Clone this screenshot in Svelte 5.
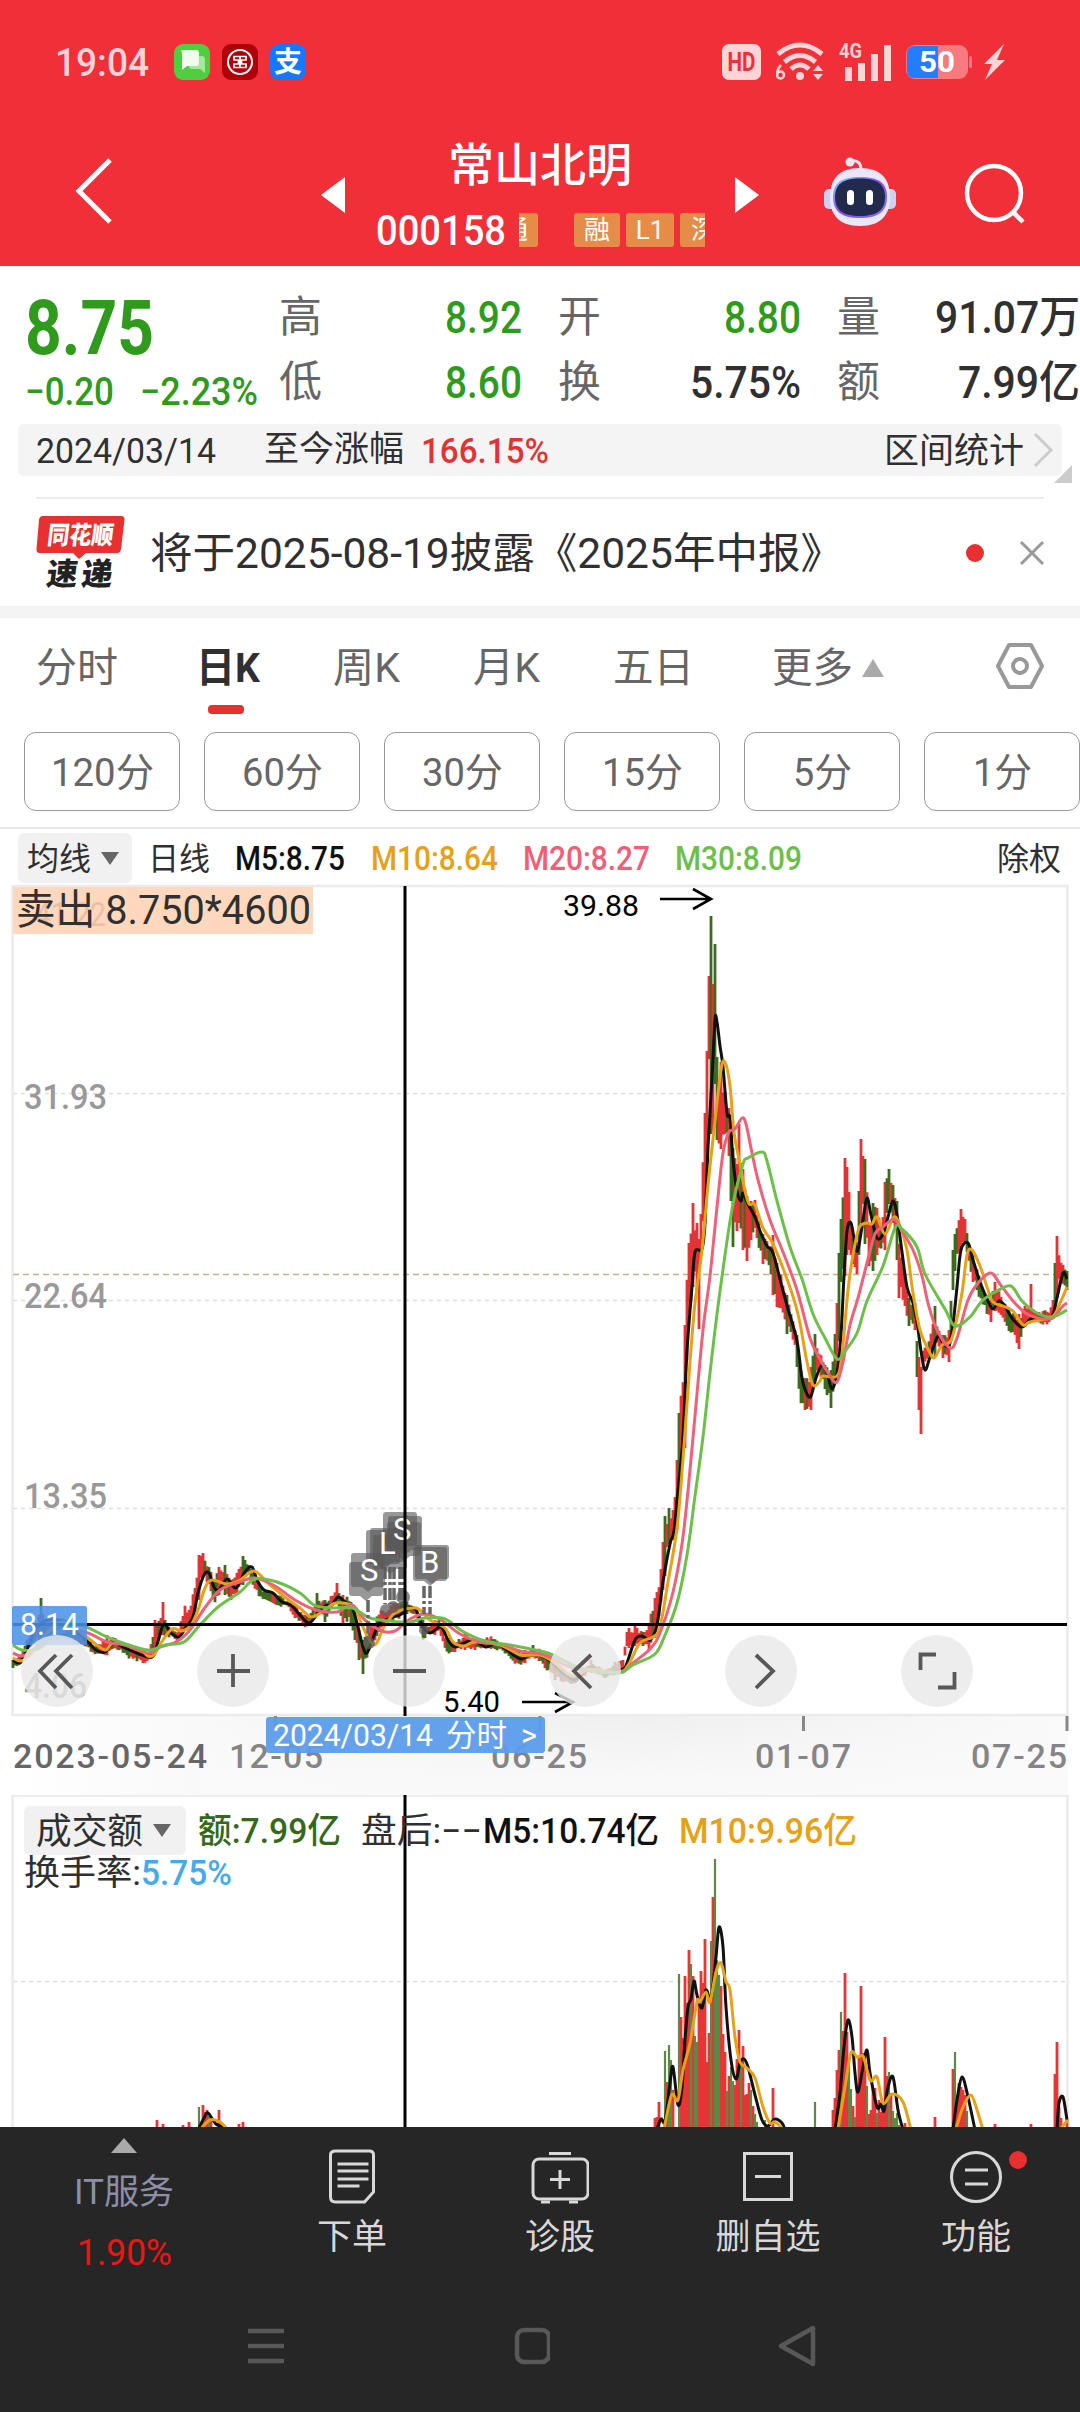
<script>
  const quotes = [
    { label: '高', value: '8.92', w: 77, down: true },
    { label: '开', value: '8.80', w: 77, down: true },
    { label: '量', value: '91.07万', w: 145 },
    { label: '低', value: '8.60', w: 77, down: true },
    { label: '换', value: '5.75%', w: 111 },
    { label: '额', value: '7.99亿', w: 122 },
  ];

  const tabs = [
    { name: '分时', w: 82 },
    { name: '日K', w: 64, active: true },
    { name: '周K', w: 67 },
    { name: '月K', w: 67 },
    { name: '五日', w: 81 },
    { name: '更多', w: 81, more: true },
  ];

  const periods = [
    { name: '120分', w: 103 },
    { name: '60分', w: 81 },
    { name: '30分', w: 81 },
    { name: '15分', w: 81 },
    { name: '5分', w: 59 },
    { name: '1分', w: 59 },
  ];

  const parse = (s) => s.trim().split(/\s+/).map((p) => p.split(',').map(Number));

  // moving averages of the daily chart
  const ma5 = parse(`13,1660 20,1663 27,1650 34,1632 43,1622 55,1619 71,1627 88,1642 96,1650 105,1652 114,1642 123,1647 139,1654 148,1657 154,1655
    159,1638 164,1624 171,1633 179,1637 186,1627 193,1617 198,1593 204,1575 209,1573 214,1587 219,1590 227,1579 236,1588 245,1572 252,1567 257,1580
    264,1590 273,1593 282,1602 291,1605 300,1615 309,1623 318,1613 325,1606 332,1605 338,1597 345,1602 352,1607 357,1623 363,1647 367,1653 373,1638
    379,1623 386,1620 393,1617 400,1615 409,1608 416,1610 423,1627 430,1633 441,1627 448,1640 455,1647 464,1643 473,1640 486,1647 496,1643 507,1650
    521,1659 532,1653 546,1658 563,1673 574,1680 579,1677 591,1668 606,1673 623,1669 627,1663 635,1640 642,1636 650,1640 657,1625 663,1582 670,1544
    674,1531 678,1491 683,1437 687,1351 692,1287 695,1252 702,1249 705,1223 708,1148 712,1078 715,1020 717,1022 720,1046 723,1067 727,1113 730,1118
    733,1159 737,1191 741,1201 743,1193 748,1204 755,1217 760,1231 767,1246 773,1253 782,1287 788,1309 797,1341 802,1378 807,1394 811,1396 816,1378
    822,1365 827,1373 832,1389 837,1373 841,1335 844,1276 847,1231 851,1223 855,1244 858,1250 863,1220 867,1198 871,1215 877,1238 883,1234 888,1217
    893,1201 897,1215 902,1252 907,1287 913,1303 917,1322 921,1351 925,1370 930,1357 938,1336 943,1343 949,1346 953,1325 957,1287 961,1250 968,1243
    973,1260 980,1282 988,1301 993,1309 999,1301 1005,1306 1012,1318 1022,1327 1032,1318 1043,1319 1052,1317 1057,1298 1063,1273 1067,1279`);
  const ma10 = parse(`13,1658 20,1661 28,1657 38,1645 50,1630 65,1622 88,1638 105,1650 114,1643 140,1650 148,1656 154,1655 161,1643 172,1629 182,1631
    191,1625 198,1610 205,1588 212,1580 227,1584 240,1580 254,1571 268,1583 286,1598 300,1608 311,1617 322,1612 336,1603 354,1607 362,1625 374,1645
    384,1627 395,1613 412,1608 420,1610 430,1620 445,1628 453,1642 464,1646 475,1642 500,1645 521,1655 540,1655 555,1663 572,1676 590,1669 610,1672
    623,1671 630,1662 640,1643 653,1637 660,1627 668,1582 677,1528 683,1459 690,1362 695,1303 702,1250 708,1185 715,1121 721,1070 725,1062 730,1086
    734,1132 740,1164 745,1191 749,1204 755,1205 763,1228 773,1244 787,1279 798,1314 807,1362 813,1385 820,1381 823,1376 837,1376 842,1354 848,1290
    853,1255 859,1228 867,1223 872,1224 877,1217 885,1234 894,1217 900,1226 907,1250 913,1293 920,1330 928,1349 934,1358 942,1345 950,1342 955,1327
    962,1293 967,1255 972,1250 980,1266 987,1287 993,1302 1003,1306 1013,1311 1023,1325 1030,1322 1052,1317 1060,1303 1067,1287`);
  const ma20 = parse(`13,1653 22,1656 33,1650 50,1638 70,1630 88,1633 107,1642 125,1645 148,1653 160,1647 176,1642 190,1630 204,1609 220,1590 240,1582
    255,1578 275,1586 295,1600 316,1610 337,1612 352,1605 365,1620 382,1631 395,1631 410,1619 425,1614 441,1620 460,1634 480,1642 500,1644 520,1651
    545,1655 570,1667 600,1672 623,1671 633,1663 650,1649 660,1633 673,1592 682,1544 688,1491 695,1416 703,1330 710,1276 717,1207 723,1153 729,1132
    735,1129 742,1118 746,1124 752,1153 758,1180 770,1220 783,1252 797,1290 810,1338 820,1359 830,1376 837,1382 843,1362 850,1325 858,1298 867,1263
    875,1234 883,1227 894,1219 902,1231 913,1250 922,1276 928,1303 937,1330 950,1348 957,1338 967,1303 975,1287 990,1273 1000,1284 1013,1301
    1027,1314 1043,1319 1053,1318 1062,1307 1067,1303`);
  const ma30 = parse(`13,1645 22,1650 40,1648 60,1630 80,1625 107,1637 120,1642 148,1650 165,1645 184,1642 200,1625 218,1607 240,1592 255,1579
    277,1582 300,1593 314,1605 330,1608 352,1608 370,1618 390,1621 410,1622 425,1618 445,1619 462,1631 485,1641 510,1645 540,1651 553,1655 580,1668
    610,1673 623,1672 633,1665 655,1654 665,1635 677,1603 687,1555 695,1496 703,1437 710,1373 717,1314 725,1255 733,1204 743,1164 748,1158 762,1152
    767,1161 777,1201 790,1247 802,1279 813,1314 825,1338 837,1359 845,1351 857,1333 867,1301 883,1266 895,1228 902,1229 917,1247 925,1274 945,1309
    955,1326 970,1317 982,1301 997,1291 1011,1286 1022,1301 1037,1313 1052,1317 1067,1310`);

  // x, high, low along the chart; the bars in between are interpolated
  const envelope = parse(`13,1660,1668 20,1655,1665 27,1640,1655 34,1625,1645 39,1615,1640 41,1598,1638 43,1614,1640 70,1620,1640 88,1638,1650 96,1645,1655
    107,1635,1655 115,1638,1648 130,1645,1660 143,1650,1663 150,1650,1663 155,1620,1650 161,1618,1635 163,1602,1635 165,1620,1636 178,1632,1643
    184,1604,1637 190,1610,1628 194,1588,1620 199,1555,1600 203,1553,1575 208,1560,1590 214,1580,1607 219,1567,1595 225,1565,1595 231,1580,1600
    238,1568,1595 243,1556,1585 248,1560,1575 254,1575,1590 262,1588,1600 270,1590,1603 280,1595,1608 286,1600,1605 295,1605,1618 305,1615,1627
    312,1610,1622 317,1593,1615 325,1600,1622 332,1593,1610 337,1583,1603 343,1595,1625 350,1595,1625 355,1610,1640 359,1630,1660 363,1640,1674
    370,1625,1650 378,1612,1635 390,1605,1622 402,1597,1618 407,1602,1614 416,1608,1615 423,1620,1640 430,1625,1635 440,1615,1635 446,1635,1656
    455,1642,1652 465,1633,1650 475,1640,1650 490,1635,1650 500,1640,1652 510,1648,1658 516,1650,1667 525,1650,1663 533,1645,1657 545,1652,1668
    555,1665,1680 562,1670,1682 574,1675,1685 585,1668,1676 591,1660,1672 605,1670,1678 615,1662,1675 623,1660,1673 627,1632,1646 629,1628,1648
    635,1626,1646 643,1632,1646 650,1617,1657 655,1598,1638 660,1566,1622 663,1542,1590 665,1516,1576 669,1508,1544 673,1510,1540 677,1460,1530
    679,1413,1500 682,1370,1464 685,1325,1448 688,1239,1362 693,1203,1287 697,1223,1292 699,1239,1329 702,1175,1255 705,1113,1223 707,1051,1180
    709,976,1059 711,916,1134 713,984,1132 715,944,1084 717,1057,1140 721,1062,1149 725,1092,1134 729,1108,1156 731,1121,1201 733,1148,1247
    737,1164,1231 739,1124,1223 743,1169,1250 747,1196,1261 751,1201,1240 755,1200,1228 758,1215,1244 763,1234,1264 768,1239,1260 773,1235,1295
    777,1263,1307 782,1276,1309 787,1295,1334 792,1309,1333 797,1335,1367 800,1362,1410 805,1378,1410 811,1367,1410 815,1334,1381 818,1346,1373
    825,1365,1389 831,1370,1408 834,1346,1397 837,1303,1373 839,1253,1341 841,1219,1282 845,1158,1276 847,1167,1255 849,1192,1250 852,1228,1268
    857,1242,1274 859,1191,1255 861,1139,1223 863,1156,1204 865,1159,1244 869,1223,1266 873,1203,1271 877,1208,1255 882,1228,1250 885,1182,1250
    889,1169,1204 893,1185,1223 897,1201,1260 899,1244,1298 905,1276,1306 909,1298,1326 915,1303,1330 917,1341,1377 919,1357,1410 921,1367,1434
    923,1351,1370 928,1341,1357 935,1306,1357 938,1325,1345 943,1335,1358 949,1330,1362 951,1301,1341 953,1250,1290 955,1234,1271 961,1209,1250
    965,1219,1244 968,1239,1260 973,1255,1282 980,1279,1301 987,1298,1314 991,1298,1322 995,1282,1311 1002,1298,1317 1009,1309,1331 1019,1314,1349
    1025,1306,1327 1029,1308,1324 1031,1284,1322 1033,1309,1322 1042,1311,1326 1050,1309,1324 1053,1300,1318 1055,1263,1314 1057,1236,1298
    1060,1260,1285 1067,1271,1290`);

  const noise = (n) => {
    const v = Math.sin(n * 12.9898) * 43758.5453;
    return v - Math.floor(v);
  };

  function lerpAt(list, x, k) {
    let i = 1;
    while (i < list.length - 1 && list[i][0] < x) i++;
    const a = list[i - 1];
    const b = list[i];
    return a[k] + ((b[k] - a[k]) * (x - a[0])) / (b[0] - a[0]);
  }

  const candles = [];
  for (let x = 13; x <= 1067; x += 2) {
    const hi = lerpAt(envelope, x, 1);
    const lo = lerpAt(envelope, x, 2);
    const exact = envelope.some((e) => e[0] === x);
    const range = lo - hi;
    const top = exact ? hi : hi + range * 0.3 * noise(x);
    const bottom = exact ? lo : lo - range * 0.3 * noise(x + 7);
    const slope = lerpAt(ma5, Math.min(x + 4, 1067), 1) - lerpAt(ma5, Math.max(x - 4, 13), 1);
    let up = noise(x * 3.7) > (slope > 0 ? 0.5 : 0.25);
    if (slope < -25 && x < 710) up = true;
    if ([41, 711, 715, 665, 669, 679, 731, 733, 889, 815, 917, 955].includes(x)) up = false;
    if ([713, 721, 723, 725, 739, 743, 747, 773, 777, 845, 847, 861, 919, 921, 961, 1031, 1057].includes(x)) up = true;
    candles.push({ x, top, h: Math.max(bottom - top, 3), up });
  }

  // turnover bars: x, top; the second list holds the falling days
  const volUp = parse(`157,2120 163,2124 183,2125 189,2122 203,2105 205,2112 207,2110 211,2118 219,2110 239,2124 243,2122 655,2118 657,2117 659,2102 667,2082
    673,2090 681,2017 683,2038 685,1976 687,2003 689,1950 693,1976 699,2003 701,1971 703,1983 705,1939 707,2062 709,2033 713,1897 721,1986 723,2034
    725,2052 729,2076 735,2085 737,2059 739,2030 743,2046 745,2095 747,2094 749,2083 753,2106 773,2088 833,2110 835,2098 837,2070 839,2050 843,2031
    845,1973 847,2032 853,2106 857,2087 859,2058 861,1986 863,2053 865,2058 869,2114 871,2110 873,2088 875,2088 879,2100 881,2112 883,2105 885,2037
    887,2076 891,2093 905,2123 935,2117 953,2069 957,2095 959,2083 961,2087 963,2090 965,2095 995,2124 1031,2124 1055,2074 1057,2042 1059,2107
    1061,2118 1067,2120`);
  const volDown = parse(`199,2107 209,2116 665,2051 669,2045 671,2060 679,1974 691,1964 695,2036 697,2042 711,1941 715,1859 717,1960 719,1975 727,2091
    731,2067 733,2081 741,2060 751,2090 755,2114 757,2122 765,2120 815,2102 841,2012 849,2065 851,2089 855,2117 867,2086 877,2113 889,2072 893,2111
    895,2118 897,2113 899,2125 955,2052 967,2111`);
  const volMa5 = [
    `199,2128 204,2118 208,2113 216,2124 224,2127`,
    `657,2129 661,2119 665,2121 670,2083 673,2067 678,2105 682,2087 685,2040 688,2007 691,1999 694,1981 697,1995 702,2008 706,1990 711,1998 716,1957
    719,1927 723,1947 726,2007 731,2060 736,2079 740,2063 744,2059 748,2067 755,2095 762,2120 768,2126 775,2119 782,2123 785,2130`,
    `835,2130 840,2093 844,2047 848,2020 852,2037 855,2073 858,2092 863,2067 867,2050 870,2073 877,2107 881,2104 884,2111 888,2087 893,2077 898,2110 903,2130`,
    `953,2129 957,2100 962,2077 968,2097 975,2130`,
    `1057,2130 1059,2103 1063,2097 1067,2120`,
  ].map(parse);
  const volMa10 = [
    `200,2130 210,2120 220,2122 227,2129`,
    `664,2129 670,2100 673,2094 678,2100 683,2070 690,2043 697,2002 700,2002 706,1992 710,2002 716,1972 721,1963 726,1982 730,1990 735,2037 740,2062
    747,2068 755,2078 763,2107 770,2123 775,2122 783,2129`,
    `838,2129 845,2087 851,2053 857,2057 863,2056 867,2070 871,2081 877,2077 883,2103 892,2094 903,2102 911,2130`,
    `956,2129 963,2107 971,2095 977,2110 983,2130`,
    `1060,2129 1068,2120`,
  ].map(parse);

  function curve(pts) {
    let d = `M${pts[0][0]} ${pts[0][1]}`;
    for (let i = 0; i < pts.length - 1; i++) {
      const p0 = pts[i - 1] || pts[i];
      const p1 = pts[i];
      const p2 = pts[i + 1];
      const p3 = pts[i + 2] || p2;
      d += `C${p1[0] + (p2[0] - p0[0]) / 6} ${p1[1] + (p2[1] - p0[1]) / 6} ${p2[0] - (p3[0] - p1[0]) / 6} ${p2[1] - (p3[1] - p1[1]) / 6} ${p2[0]} ${p2[1]}`;
    }
    return d;
  }

  const bars = (list) => list.map(([x, y]) => `M${x} 2130V${y}`).join('');

  // buy and sell flags, stacked where trades lie close together
  const markers = [
    { x: 351, y: 1553 }, { x: 349, y: 1562 }, { x: 366, y: 1530 }, { x: 370, y: 1528 }, { x: 373, y: 1535 },
    { x: 388, y: 1516 }, { x: 383, y: 1512 }, { x: 387, y: 1522 }, { x: 413, y: 1547 }, { x: 415, y: 1545 },
  ];
  const stems = [368, 385, 390, 394, 400, 403, 424, 430];
  const buttons = [57, 233, 409, 585, 761, 937];
</script>

<!-- text run squeezed to a fixed width, like the condensed digits of the app -->
{#snippet fit(text, w, size)}
  <svg class="fit" width={w} height={size} style:font-size="{size}px">
    <text y={size * 0.86} textLength={w} lengthAdjust="spacingAndGlyphs">{text}</text>
  </svg>
{/snippet}

{#snippet label(x, y, text, w, cls)}
  <text {x} {y} class={cls} textLength={w} lengthAdjust="spacingAndGlyphs">{text}</text>
{/snippet}

{#snippet spaced(x, y, text, w, cls)}
  <text {x} {y} class={cls} textLength={w}>{text}</text>
{/snippet}

<main class="screen">
  <header class="top">
    <div class="status">
      <div class="status-left">
        <span class="time">{@render fit('19:04', 94, 38)}</span>
        <svg class="app-icon" viewBox="0 0 36 36">
          <rect width="36" height="36" rx="9" fill="#4fce3f" />
          <path d="M15 12h13q3 0 3 3v14l-5-4h-8q-3 0-3-3z" fill="#a5e89b" />
          <path d="M9 6h13q3 0 3 3v10q0 3-3 3H13l-5 4V9q-2-3 1-3z" fill="#f1fcef" />
        </svg>
        <svg class="app-icon" viewBox="0 0 36 36">
          <rect width="36" height="36" rx="9" fill="#ad0009" />
          <circle cx="18" cy="18" r="12" fill="none" stroke="#fff" stroke-width="2" />
          <path d="M12 12.500h12v3.500h-4.500v4H24v3.500H12V20h4.500v-4H12zM18 12v12" fill="none" stroke="#fff" stroke-width="1.700" />
        </svg>
        <svg class="app-icon" viewBox="0 0 36 36">
          <rect width="36" height="36" rx="9" fill="#1677ff" />
          <text x="4" y="28" class="zhi">支</text>
        </svg>
      </div>
      <div class="status-right">
        <svg width="39" height="36" viewBox="0 0 39 36">
          <rect width="39" height="36" rx="7" fill="#ffd4d6" />
          <text x="5.500" y="26.500" class="hd" textLength="28" lengthAdjust="spacingAndGlyphs">HD</text>
        </svg>
        <svg width="48" height="40" viewBox="1 0 48 40" fill="none" stroke="#ffd4d6" stroke-width="5">
          <path d="M3 12q22-18 44 0M9.500 20q15.500-13 31 0M16 27q9-8 18 0" />
          <circle cx="25" cy="34" r="4" fill="#ffd4d6" stroke="none" />
          <path d="M38 29l5-6 5 6zM38 32l5 6 5-6z" fill="#ffd4d6" stroke="none" />
          <circle cx="5.500" cy="33" r="3.500" stroke-width="2.500" />
          <path d="M2 33q0-6 4-10" stroke-width="2.500" />
        </svg>
        <svg width="52" height="42" viewBox="0 -2 52 42" fill="#ffd4d6">
          <text x="0" y="15" class="g4" textLength="23" lengthAdjust="spacingAndGlyphs">4G</text>
          <path d="M6 24h7v14H6zM19 20h7v18h-7zM32 11h7v27h-7zM45 2h7v36h-7z" />
        </svg>
        <svg width="66" height="36" viewBox="0 0 66 36">
          <rect x="0" y="1" width="62" height="34" rx="9" fill="#f77a80" />
          <path d="M9 2h23v32H9q-8 0-8-8V10q0-8 8-8z" fill="#247cff" />
          <rect x="63" y="12" width="3" height="12" rx="1.500" fill="#f77a80" />
          <text x="13" y="28" class="bat" textLength="36" lengthAdjust="spacingAndGlyphs">50</text>
        </svg>
        <svg class="bolt" width="24" height="38" viewBox="0 0 24 38"><path d="M21 1L1 21h8L2 37 22 17h-8z" fill="#ffd4d6" /></svg>
      </div>
    </div>

    <nav class="titlebar">
      <svg class="back" width="38" height="66" viewBox="0 0 38 66"><path d="M35 2L4 33l31 31" fill="none" stroke="#fff" stroke-width="5" /></svg>
      <svg class="prev" width="24" height="36" viewBox="0 0 24 36"><path d="M24 0v36L0 18z" fill="#fff" /></svg>
      <div class="title">
        <h1>常山北明</h1>
        <div class="code">
          <span class="code-num">{@render fit('000158', 130, 43)}</span>
          <div class="tags">
            <span class="tag cut-left">通</span>
            <span class="tag rong">融</span>
            <span class="tag">L1</span>
            <span class="tag cut-right">深</span>
          </div>
        </div>
      </div>
      <svg class="next" width="24" height="36" viewBox="0 0 24 36"><path d="M0 0v36l24-18z" fill="#fff" /></svg>
      <svg class="robot" width="74" height="70" viewBox="0 0 74 70">
        <defs>
          <linearGradient id="visor" x1="0" y1="0" x2="1" y2="1">
            <stop offset="0" stop-color="#7fd4ff" />
            <stop offset="0.5" stop-color="#8a4bf0" />
            <stop offset="1" stop-color="#7a78ff" />
          </linearGradient>
        </defs>
        <path d="M27 4q11-2 11 9" fill="none" stroke="#f3dfee" stroke-width="3" />
        <circle cx="27" cy="5" r="4.500" fill="#f3e6f3" />
        <rect x="1" y="32" width="72" height="20" rx="5" fill="#cfcff2" />
        <path d="M37 11C58 11 67 22 67 40S58 69 37 69 7 58 7 40 16 11 37 11z" fill="#e9e7f9" />
        <path d="M37 20C56 20 64 26 64 40S56 61 37 61 10 54 10 40 18 20 37 20z" fill="url(#visor)" />
        <path d="M37 21.500C54 21.500 62 27 62 40S54 59 37 59 12 53 12 40 20 21.500 37 21.500z" fill="#222b4c" />
        <rect x="24" y="33" width="7" height="15" rx="3.500" fill="#fff" />
        <rect x="43" y="33" width="7" height="15" rx="3.500" fill="#fff" />
      </svg>
      <svg class="search" width="64" height="64" viewBox="0 0 64 64" fill="none" stroke="#fff" stroke-width="4.500">
        <circle cx="30" cy="31" r="27" /><path d="M48 49l11 11" />
      </svg>
    </nav>
  </header>

  <section class="quote">
    <div class="price">
      <div class="last">{@render fit('8.75', 129, 76)}</div>
      <div class="change">{@render fit('−0.20', 89, 39)}{@render fit('−2.23%', 118, 39)}</div>
    </div>
    <div class="grid">
      {#each quotes as q}
        <div class="cell">
          <span class="name">{q.label}</span>
          <span class="value" class:down={q.down}>{@render fit(q.value, q.w, 44)}</span>
        </div>
      {/each}
    </div>
  </section>

  <section class="range">
    {@render fit('2024/03/14', 180, 35)}
    <span class="since">至今涨幅</span>
    <span class="rise">{@render fit('166.15%', 128, 35)}</span>
    <span class="stat">区间统计</span>
    <svg width="22" height="36" viewBox="0 0 22 36"><path d="M3 2l16 16L3 34" fill="none" stroke="#ccc" stroke-width="3" /></svg>
    <i class="corner"></i>
  </section>

  <section class="news">
    <svg class="logo" width="90" height="76" viewBox="0 0 90 76">
      <path d="M7 0h78q4 0 3.500 4L85 33q-.5 4-4 4H50l-7 6-6-6H4q-4 0-3.500-4L3 4q.5-4 4-4z" fill="#e83030" />
      <text x="14" y="28" transform="skewX(-7)" class="logo-a" textLength="66" lengthAdjust="spacingAndGlyphs">同花顺</text>
      <text x="18" y="69" transform="skewX(-7)" class="logo-b" textLength="66">速递</text>
    </svg>
    <span class="headline">{@render fit('将于2025-08-19披露《2025年中报》', 693, 42)}</span>
    <i class="dot"></i>
    <svg width="26" height="26" viewBox="0 0 26 26"><path d="M2 2l22 22M24 2L2 24" stroke="#999" stroke-width="3" /></svg>
  </section>

  <section class="tabs">
    {#each tabs as t}
      <div class="tab" class:active={t.active}>
        {@render fit(t.name, t.w, 41)}
        {#if t.more}<svg class="up" width="22" height="18" viewBox="0 0 22 18"><path d="M11 0l11 18H0z" fill="#aaa" /></svg>{/if}
      </div>
    {/each}
    <svg class="gear" width="50" height="48" viewBox="0 0 50 48" fill="none" stroke="#999" stroke-width="4">
      <path d="M14 3h22l11 21-11 21H14L3 24z" stroke-linejoin="round" /><circle cx="25" cy="24" r="7" />
    </svg>
  </section>

  <section class="periods">
    {#each periods as p}
      <div class="period">{@render fit(p.name, p.w, 39)}</div>
    {/each}
  </section>

  <section class="legend">
    <span class="chip">{@render fit('均线', 64, 32)}<i class="caret"></i></span>
    <span class="day">{@render fit('日线', 62, 32)}</span>
    <span class="m5">{@render fit('M5:8.75', 110, 33)}</span>
    <span class="m10">{@render fit('M10:8.64', 127, 33)}</span>
    <span class="m20">{@render fit('M20:8.27', 127, 33)}</span>
    <span class="m30">{@render fit('M30:8.09', 127, 33)}</span>
    <span class="ex">{@render fit('除权', 64, 32)}</span>
  </section>

  <svg class="chart" width="1080" height="911" viewBox="0 884 1080 911">
    <defs>
      <linearGradient id="band" x1="0" x2="1" y1="0" y2="0">
        <stop offset="0" stop-color="#fff" />
        <stop offset="0.35" stop-color="#f3f3f3" />
        <stop offset="0.6" stop-color="#efefef" />
        <stop offset="1" stop-color="#fafafa" />
      </linearGradient>
      <linearGradient id="fade" x1="0" x2="0" y1="0" y2="1">
        <stop offset="0" stop-color="#fafafa" stop-opacity="0" />
        <stop offset="0.8" stop-color="#fafafa" stop-opacity="0.9" />
      </linearGradient>
    </defs>
    <rect x="13" y="1716" width="1055" height="79" fill="url(#band)" />
    <rect x="200" y="1716" width="868" height="79" fill="url(#fade)" />
    <path d="M12.500 886H1067.500V1715H12.500z" class="frame" />
    <path d="M13 1093.500H1067M13 1300.500H1067M13 1508.500H1067" class="dash" />
    {@render label(24, 1109, '31.93', 83, 'ylabel')}
    {@render label(24, 1308, '22.64', 83, 'ylabel')}
    {@render label(24, 1508, '13.35', 83, 'ylabel')}
    {@render label(24, 1698, '4.06', 63, 'ylabel')}
    <rect x="13" y="887" width="300" height="47" fill="#ffd8bd" />
    {@render label(35, 926, '41.22', 71, 'ghost')}
    {@render label(16, 924, '卖出 8.750*4600', 295, 'sell')}

    <path d="M13 1274.500H1067" stroke="#c4b184" stroke-width="1.500" stroke-dasharray="6 4" />
    {#each candles as c}
      <rect x={c.x - 1.4} y={c.top} width="2.8" height={c.h} fill={c.up ? '#e23434' : '#3c6b1d'} />
    {/each}
    <path d={curve(ma5)} class="line" stroke="#111" />
    <path d={curve(ma10)} class="line" stroke="#e6a117" />
    <path d={curve(ma20)} class="line" stroke="#ee6278" />
    <path d={curve(ma30)} class="line" stroke="#6cc04a" />

    <g fill="#5f5f5f" opacity="0.75">
      <circle cx="369" cy="1643" r="6" /><circle cx="386" cy="1610" r="6" /><circle cx="393" cy="1607" r="6" />
      <circle cx="403" cy="1597" r="7" /><circle cx="424" cy="1630" r="5" />
    </g>
    {#each stems as x, i}
      <path d="M{x} {i < 1 ? 1600 : i > 5 ? 1586 : 1567}V{i < 1 ? 1640 : i > 5 ? 1614 : 1604}" stroke="#666" stroke-width="3.500" stroke-dasharray="12 3 3 3" />
    {/each}
    {#each markers as m}
      <path d="M{m.x + 3} {m.y}h28q3 0 3 3v28q0 3-3 3h-8l-6 5-6-5h-8q-3 0-3-3v-28q0-3 3-3z" fill="#595959" opacity="0.62" />
    {/each}
    <text x="360" y="1581" class="mark">S</text>
    <text x="379" y="1554" class="mark">L</text>
    <text x="393" y="1540" class="mark">S</text>
    <text x="420" y="1573" class="mark">B</text>

    <path d="M13 1624.500H1067M405 886V1716" stroke="#000" stroke-width="3" />
    <rect x="12" y="1606" width="75" height="39" rx="2" fill="#4c92e8" opacity="0.87" />
    {@render label(20, 1635, '8.14', 59, 'tagtext')}

    {@render label(563, 916, '39.88', 76, 'peak')}
    {@render label(443, 1712, '5.40', 57, 'peak')}
    <path d="M660 899H710M693 889L711 899 693 909M522 1702H572M555 1693L573 1702 555 1712" fill="none" stroke="#000" stroke-width="2.600" />

    {#each buttons as x}
      <circle cx={x} cy="1671" r="36" fill="#e8e8e8" opacity="0.8" />
    {/each}
    <g fill="none" stroke="#585858" stroke-width="3.800">
      <path d="M56 1655L40 1671 56 1688M72 1655L56 1671 72 1688" />
      <path d="M217 1671H250M233 1654V1687M393 1671H426" />
      <path d="M591 1655L574 1671 591 1688M756 1655L773 1671 756 1688" />
      <path d="M936 1654.500H920.500V1670M938 1687.500H954.500V1672" />
    </g>

    <path d="M275.500 1716V1731M540 1716V1731M803.500 1716V1731M1067 1716V1731" stroke="#888" stroke-width="3" />
    {@render spaced(13, 1768, '2023-05-24', 194, 'xlabel dark')}
    {@render spaced(229, 1768, '12-05', 94, 'xlabel')}
    {@render spaced(491, 1768, '06-25', 96, 'xlabel')}
    {@render spaced(755, 1768, '01-07', 96, 'xlabel')}
    {@render spaced(971, 1768, '07-25', 96, 'xlabel')}
    <rect x="266" y="1717" width="279" height="36" rx="3" fill="#5c9cec" opacity="0.95" />
    {@render label(273, 1746, '2024/03/14', 160, 'tagtext')}
    {@render label(446, 1746, '分时', 61, 'tagtext')}
    {@render label(521, 1746, '>', 16, 'tagtext')}
  </svg>

  <section class="volume">
    <svg class="volume-chart" width="1080" height="332" viewBox="0 1795 1080 332">
      <path d="M12.500 2140V1795.500H1067.500V2140" class="frame" />
      <path d="M13 1981.500H1067" class="dash" />
      <path d={bars(volUp)} stroke="#e73434" stroke-width="2.800" />
      <path d={bars(volDown)} stroke="#5d8845" stroke-width="2.200" />
      {#each volMa5 as l}<path d={curve(l)} class="line" stroke="#111" />{/each}
      {#each volMa10 as l}<path d={curve(l)} class="line" stroke="#e6a117" />{/each}
      <path d="M405 1795V2127" stroke="#000" stroke-width="3" />
    </svg>
    <div class="vol-row">
      <span class="chip vol">{@render fit('成交额', 107, 36)}<i class="caret"></i></span>
      <span class="amount">{@render fit('额:7.99亿', 143, 35)}</span>
      <span class="after">{@render fit('盘后:−−', 121, 35)}</span>
      <span class="m5">{@render fit('M5:10.74亿', 176, 35)}</span>
      <span class="m10">{@render fit('M10:9.96亿', 178, 35)}</span>
    </div>
    <div class="turn">{@render fit('换手率:', 117, 35)}<span>{@render fit('5.75%', 91, 35)}</span></div>
  </section>

  <footer>
    <div class="actions">
      <div class="index">
        <svg width="26" height="15" viewBox="0 0 26 15"><path d="M13 0l13 15H0z" fill="#aaa" /></svg>
        <span class="index-name">{@render fit('IT服务', 100, 35)}</span>
        <span class="index-rate">{@render fit('1.90%', 95, 36)}</span>
      </div>
      <div class="action">
        <svg width="58" height="58" viewBox="-2.500 0 58 58">
          <path d="M10 3h34q4 0 4 4v37l-9 10H10q-5 0-5-5V7q0-4 5-4z" /><path d="M12 16h31M12 23h31M12 31h31M12 38h22" />
        </svg>
        <span>下单</span>
      </div>
      <div class="action">
        <svg width="58" height="58" viewBox="0 0 58 58">
          <rect x="2" y="11" width="55" height="40" rx="6" /><path d="M18 5.500h22M29 22v19M19 31.500h20M10 54h9M38 54h9" />
        </svg>
        <span>诊股</span>
      </div>
      <div class="action">
        <svg width="58" height="58" viewBox="0 0 58 58"><rect x="5.500" y="5.500" width="47" height="46" /><path d="M16 28.500h26" /></svg>
        <span>删自选</span>
      </div>
      <div class="action">
        <svg width="58" height="58" viewBox="0 0 58 58"><circle cx="29" cy="29" r="24.500" /><path d="M18 22h23M18 36h23" /></svg>
        <span>功能</span>
        <i class="badge"></i>
      </div>
    </div>
    <div class="sysnav">
      <svg width="36" height="40" viewBox="0 0 36 40"><path d="M0 5h36M0 20h36M0 35h36" /></svg>
      <svg width="38" height="40" viewBox="-2 0 38 40"><rect x="3" y="4" width="32" height="32" rx="7" /></svg>
      <svg width="40" height="42" viewBox="0 0 40 42"><path d="M36 3v36L4 21z" stroke-linejoin="round" /></svg>
    </div>
  </footer>
</main>

<style>
  :global(body) {
    margin: 0;
    background: #fff;
  }

  .screen {
    width: 1080px;
    height: 2412px;
    overflow: hidden;
    display: flex;
    flex-direction: column;
    font-family: Roboto, 'Noto Sans CJK SC', sans-serif;
    color: #303030;
    background: #fff;
  }

  svg {
    display: block;
    flex: none;
  }

  .fit {
    overflow: visible;
    fill: currentColor;
  }

  .top {
    height: 266px;
    background: #f12f38;
    color: #fff;
  }

  .status {
    height: 124px;
    padding: 0 73px 0 55px;
    display: flex;
    justify-content: space-between;
    align-items: center;
  }

  .status-left {
    display: flex;
    align-items: center;
    gap: 12px;
  }

  .time {
    color: #ffd4d6;
    font-weight: 500;
    margin-right: 13px;
  }

  .app-icon {
    width: 36px;
    height: 36px;
  }

  .zhi {
    font-size: 28px;
    font-weight: 700;
    fill: #fff;
  }

  .status-right {
    display: flex;
    align-items: center;
    gap: 15px;
  }

  .bolt {
    margin-left: -4px;
  }

  .hd {
    font-size: 25px;
    font-weight: 700;
    fill: #f12f38;
  }

  .g4 {
    font-size: 21px;
    font-weight: 700;
  }

  .bat {
    font-size: 29px;
    font-weight: 700;
    fill: #fff;
  }

  .titlebar {
    height: 142px;
    display: flex;
    align-items: center;
  }

  .back {
    margin-left: 75px;
    margin-top: -8px;
  }

  .prev {
    margin-left: 208px;
  }

  .title {
    width: 390px;
    height: 142px;
    display: flex;
    flex-direction: column;
    align-items: center;
  }

  h1 {
    margin: 11px 0 0;
    font-size: 46px;
    line-height: 60px;
    font-weight: 500;
  }

  .code {
    align-self: flex-start;
    margin-left: 31px;
    margin-top: 13px;
    display: flex;
    align-items: center;
    font-weight: 500;
  }

  .tags {
    width: 186px;
    margin-left: 13px;
    display: flex;
    overflow: hidden;
  }

  .tag {
    flex: none;
    width: 48px;
    height: 34px;
    margin-right: 6px;
    border-radius: 3px;
    background: #e58d48;
    font-size: 26px;
    line-height: 34px;
    font-weight: 400;
    text-align: center;
  }

  .rong {
    width: 46px;
  }

  .cut-left {
    margin-left: -27px;
    width: 46px;
    margin-right: 36px;
  }

  .robot {
    margin-left: 64px;
    margin-top: -6px;
  }

  .search {
    margin-left: 67px;
    margin-top: -2px;
  }

  .quote {
    height: 158px;
    display: flex;
    overflow: hidden;
  }

  .price {
    width: 279px;
    padding: 23px 0 0 25px;
    box-sizing: border-box;
    color: #2f9a1c;
    font-weight: 500;
    flex: none;
  }

  .last {
    font-weight: 700;
  }

  .change {
    display: flex;
    gap: 26px;
    margin-top: 6px;
  }

  .grid {
    display: grid;
    grid-template-columns: 243px 279px 279px;
    grid-auto-rows: 65px;
    padding-top: 18px;
  }

  .cell {
    display: flex;
    align-items: center;
    justify-content: space-between;
  }

  .cell:not(:nth-child(3n + 1)) {
    padding-left: 36px;
  }

  .name {
    font-size: 43px;
    line-height: 60px;
    color: #666;
  }

  .value {
    font-weight: 500;
  }

  .down {
    color: #2f9a1c;
  }

  .range {
    position: relative;
    width: 1044px;
    height: 52px;
    margin: 0 0 0 18px;
    padding: 0 8px 0 18px;
    box-sizing: border-box;
    display: flex;
    align-items: center;
    background: #f4f4f4;
    border-radius: 6px;
    font-size: 35px;
    line-height: 50px;
  }

  .since {
    margin: 0 17px 0 48px;
  }

  .rise {
    color: #e03434;
    font-weight: 500;
  }

  .stat {
    margin-left: auto;
    margin-right: 8px;
    padding-top: 3px;
  }

  .corner {
    position: absolute;
    right: -10px;
    bottom: -7px;
    border-left: 18px solid transparent;
    border-bottom: 18px solid #ccc;
  }

  .news {
    height: 109px;
    margin: 21px 36px 0;
    border-top: 2px solid #ececec;
    box-sizing: border-box;
    display: flex;
    align-items: center;
  }

  .logo {
    margin-top: 2px;
  }

  .logo-a {
    font-size: 25px;
    font-weight: 900;
    fill: #fff;
  }

  .logo-b {
    font-size: 31px;
    font-weight: 900;
    fill: #222;
  }

  .headline {
    margin-left: 24px;
  }

  .dot {
    width: 18px;
    height: 18px;
    margin: 0 35px 0 auto;
    border-radius: 50%;
    background: #e83030;
  }

  .news > svg:last-child {
    margin-right: -1px;
  }

  .tabs {
    height: 115px;
    border-top: 12px solid #f4f4f4;
    padding: 0 0 0 36px;
    display: grid;
    grid-template-columns: 160px 137px 140px 140px 159px 223px 1fr;
    box-sizing: border-box;
    color: #666;
  }

  .tab {
    height: 99px;
    display: flex;
    align-items: center;
    justify-self: start;
    position: relative;
  }

  .active {
    color: #303030;
    font-weight: 700;
  }

  .active::after {
    content: '';
    position: absolute;
    left: 12px;
    bottom: 3px;
    width: 36px;
    height: 9px;
    border-radius: 4px;
    background: #e83030;
  }

  .up {
    margin-left: 9px;
  }

  .gear {
    margin-top: 24px;
  }

  .periods {
    height: 108px;
    padding: 11px 0 0 24px;
    box-sizing: border-box;
    display: flex;
    gap: 24px;
    border-bottom: 2px solid #e8e8e8;
    color: #666;
  }

  .period {
    flex: none;
    width: 156px;
    height: 79px;
    box-sizing: border-box;
    border: 1.500px solid #999;
    border-radius: 12px;
    display: flex;
    align-items: center;
    justify-content: center;
  }

  .legend {
    height: 55px;
    padding: 3px 19px 0 18px;
    box-sizing: border-box;
    display: flex;
    align-items: center;
  }

  .chip {
    width: 114px;
    height: 50px;
    padding-left: 9px;
    box-sizing: border-box;
    display: flex;
    align-items: center;
    background: #f1f1f1;
    border-radius: 6px;
  }

  .caret {
    margin-left: 10px;
    border: 9px solid transparent;
    border-top: 13px solid #666;
    border-bottom: 0;
  }

  .day {
    margin: 0 25px 0 16px;
  }

  .m5 {
    color: #111;
  }

  .m10 {
    margin-left: 26px;
    color: #e6a117;
  }

  .m20 {
    margin-left: 25px;
    color: #f05f76;
  }

  .m30 {
    margin-left: 25px;
    color: #6cc04a;
  }

  .ex {
    margin-left: auto;
  }

  .legend .m5,
  .legend .m10,
  .legend .m20,
  .legend .m30,
  .amount,
  .vol-row .m5,
  .vol-row .m10 {
    font-weight: 500;
  }

  .frame {
    fill: none;
    stroke: #ebebeb;
    stroke-width: 2.500;
  }

  .dash {
    fill: none;
    stroke: #dedede;
    stroke-width: 1.500;
    stroke-dasharray: 4 4;
  }

  .line {
    fill: none;
    stroke-width: 3;
    stroke-linejoin: round;
  }

  .ylabel {
    font-size: 35px;
    font-weight: 500;
    fill: #999;
  }

  .ghost {
    font-size: 33px;
    fill: #e8bfa2;
  }

  .sell {
    font-size: 41px;
    fill: #303030;
  }

  .peak {
    font-size: 29px;
    fill: #000;
  }

  .tagtext {
    font-size: 31px;
    fill: #fff;
  }

  .xlabel {
    font-size: 34px;
    font-weight: 500;
    fill: #858585;
  }

  .dark {
    fill: #666;
  }

  .mark {
    font-size: 31px;
    fill: #fff;
  }

  .volume {
    position: relative;
    height: 332px;
    padding: 11px 0 0 24px;
    box-sizing: border-box;
  }

  .volume-chart {
    position: absolute;
    inset: 0;
    overflow: hidden;
  }

  .vol-row,
  .turn {
    position: relative;
    display: flex;
    align-items: center;
  }

  .vol-row .m5 {
    margin-left: 1px;
  }

  .vol-row .m10 {
    margin-left: 20px;
  }

  .vol {
    width: 162px;
    height: 49px;
    padding-left: 12px;
    margin-right: 12px;
  }

  .amount {
    color: #35691a;
    margin-right: 20px;
  }

  .turn span {
    color: #45aaec;
    font-weight: 500;
  }

  footer {
    height: 285px;
    background: #262626;
    color: #d8d8d8;
  }

  .actions {
    height: 172px;
    display: grid;
    grid-template-columns: 248px repeat(4, 208px);
  }

  .index,
  .action {
    display: flex;
    flex-direction: column;
    align-items: center;
  }

  .index > svg {
    margin-top: 11px;
  }

  .index-name {
    margin-top: 21px;
    color: #8c8fa8;
  }

  .index-rate {
    margin-top: 25px;
    color: #f01414;
  }

  .action {
    position: relative;
    padding-top: 21px;
    font-size: 35px;
    line-height: 50px;
  }

  .action svg {
    fill: none;
    stroke: #d8d8d8;
    stroke-width: 3;
  }

  .action span {
    margin-top: 7px;
  }

  .badge {
    position: absolute;
    left: 137px;
    top: 24px;
    width: 18px;
    height: 18px;
    border-radius: 50%;
    background: #e83030;
  }

  .sysnav {
    height: 94px;
    padding: 0 263px 0 248px;
    display: flex;
    align-items: center;
    justify-content: space-between;
  }

  .sysnav svg {
    fill: none;
    stroke: #585858;
    stroke-width: 4.500;
  }
</style>
